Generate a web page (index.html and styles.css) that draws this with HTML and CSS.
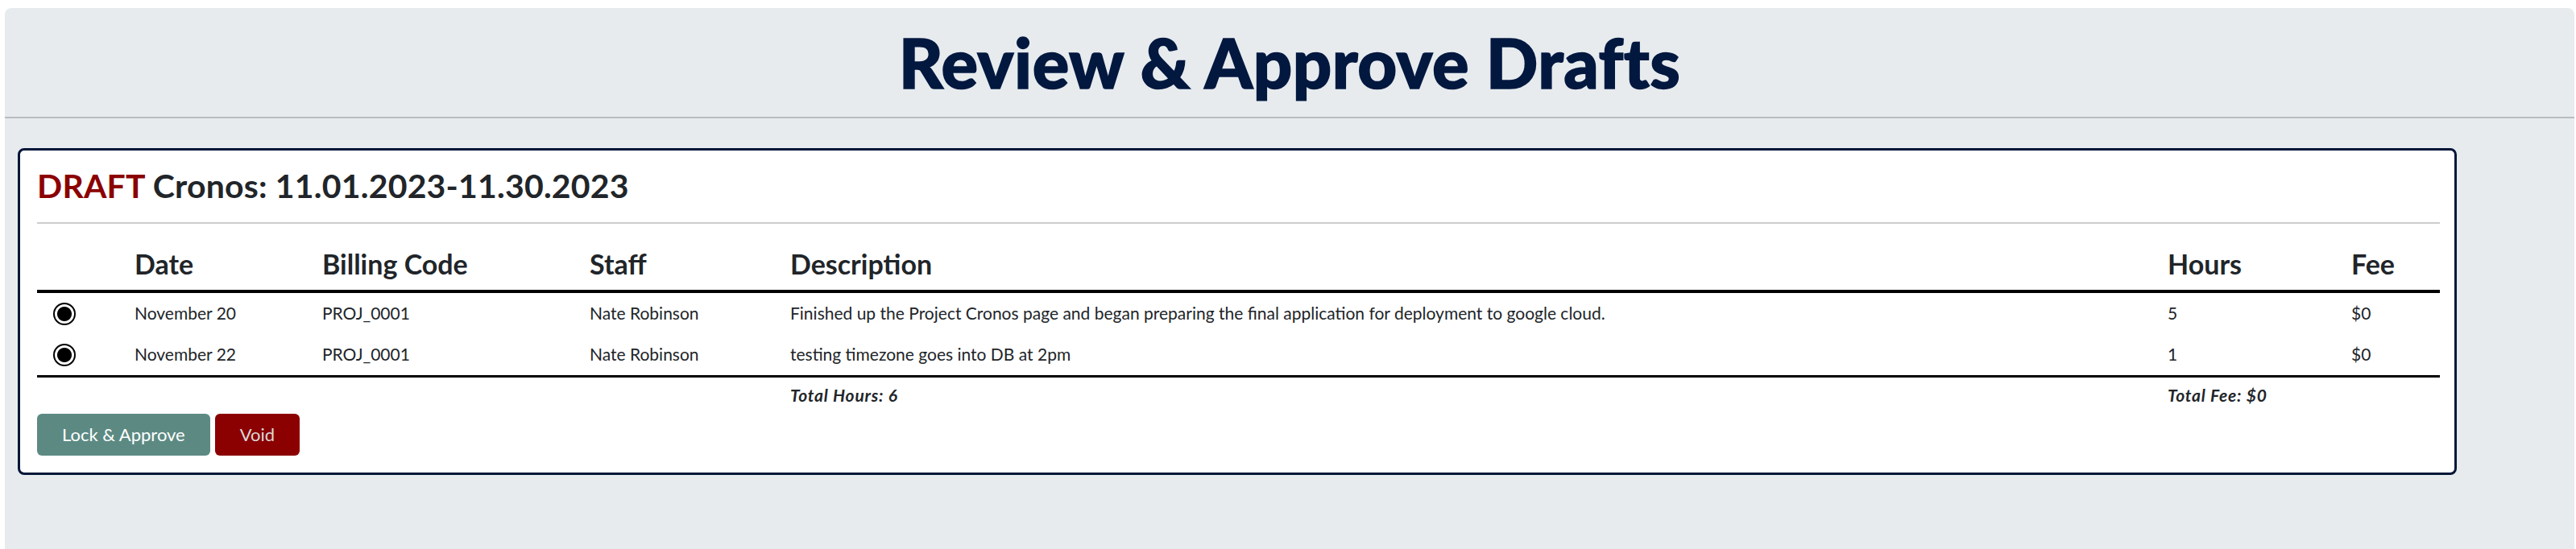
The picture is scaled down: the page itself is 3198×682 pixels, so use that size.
FILE: index.html
```html
<!DOCTYPE html>
<html lang="en">
<head>
<meta charset="utf-8">
<title>Review &amp; Approve Drafts</title>
<link rel="stylesheet" href="styles.css">
</head>
<body>
<div class="page">
  <header class="header">
    <h1 class="page-title">Review &amp; Approve Drafts</h1>
  </header>
  <main class="content">
    <section class="card">
      <h2 class="card-title"><span class="draft">DRAFT</span> Cronos: 11.01.2023-11.30.2023</h2>
      <hr class="rule">
      <table class="entries">
        <colgroup>
          <col class="c-sel"><col class="c-date"><col class="c-code"><col class="c-staff"><col class="c-desc"><col class="c-hours"><col class="c-fee">
        </colgroup>
        <thead>
          <tr>
            <th></th>
            <th>Date</th>
            <th>Billing Code</th>
            <th>Staff</th>
            <th>Description</th>
            <th>Hours</th>
            <th>Fee</th>
          </tr>
        </thead>
        <tbody>
          <tr>
            <td class="sel"><input class="radio" type="radio" checked></td>
            <td>November 20</td>
            <td>PROJ_0001</td>
            <td>Nate Robinson</td>
            <td>Finished up the Project Cronos page and began preparing the final application for deployment to google cloud.</td>
            <td>5</td>
            <td>$0</td>
          </tr>
          <tr class="last">
            <td class="sel"><input class="radio" type="radio" checked></td>
            <td>November 22</td>
            <td>PROJ_0001</td>
            <td>Nate Robinson</td>
            <td>testing timezone goes into DB at 2pm</td>
            <td>1</td>
            <td>$0</td>
          </tr>
        </tbody>
        <tfoot>
          <tr>
            <td></td><td></td><td></td><td></td>
            <td class="total">Total Hours: 6</td>
            <td class="total" colspan="2">Total Fee: $0</td>
          </tr>
        </tfoot>
      </table>
      <div class="actions">
        <button class="btn btn-approve" type="button">Lock &amp; Approve</button>
        <button class="btn btn-void" type="button">Void</button>
      </div>
    </section>
  </main>
</div>
</body>
</html>
```
FILE: styles.css
```css
* { box-sizing: border-box; }

html, body {
  margin: 0;
  padding: 0;
  background: #ffffff;
  height: 100%;
}

body {
  font-family: "Lato", "Liberation Sans", sans-serif;
  color: #212529;
}

.page {
  margin: 10px 2px 0 6px;
  min-height: calc(100vh - 10px);
  background: #e7ebee;
  border-radius: 8px 8px 0 0;
}

.header {
  height: 137px;
  border-bottom: 2px solid #b9bdc0;
  display: flex;
  align-items: center;
  justify-content: center;
}

.page-title {
  margin: 0;
  font-family: "Lato", sans-serif;
  font-weight: 900;
  font-size: 85px;
  line-height: 1;
  color: #02183f;
  letter-spacing: 0.5px;
  -webkit-text-stroke: 1.5px #02183f;
}

.content {
  padding: 37px 146px 0 16px;
}

.card {
  background: #ffffff;
  border: 3px solid #011638;
  border-radius: 8px;
  padding: 19px 18px 21px 21px;
}

.card-title {
  margin: 0;
  font-size: 41px;
  line-height: 1.2;
  font-weight: 700;
  color: #212529;
  letter-spacing: 0.2px;
}

.draft {
  color: #8b0000;
}

.rule {
  margin: 21px 0 0;
  border: 0;
  border-top: 2px solid #cccccc;
  height: 0;
}

.entries {
  width: 100%;
  table-layout: fixed;
  border-collapse: collapse;
}

.c-sel { width: 113px; }
.c-date { width: 233px; }
.c-code { width: 332px; }
.c-staff { width: 249px; }
.c-desc { width: 1710px; }
.c-hours { width: 228px; }
.c-fee { width: 118px; }

.entries th {
  text-align: left;
  font-size: 34px;
  line-height: 40px;
  font-weight: 700;
  padding: 30px 8px 12px;
  border-bottom: 4px solid #000000;
}

.entries tbody td {
  font-size: 21px;
  line-height: 27px;
  font-weight: 400;
  padding: 11px 8px 13px;
  vertical-align: middle;
  white-space: nowrap;
  color: #212529;
}

.entries tbody tr.last td {
  border-bottom: 3px solid #000000;
}

.entries td.sel {
  padding: 0 0 0 20px;
  line-height: 0;
}

.radio {
  appearance: none;
  -webkit-appearance: none;
  margin: 0;
  width: 28px;
  height: 28px;
  border: 2.5px solid #000000;
  border-radius: 50%;
  background: radial-gradient(circle, #000000 0 8.5px, #ffffff 9.5px);
  vertical-align: middle;
}

.entries tfoot td {
  font-size: 21px;
  line-height: 27px;
  padding: 8px 8px 8px;
}

.entries td.total {
  font-weight: 700;
  font-style: italic;
  letter-spacing: 0.8px;
}

.actions {
  display: flex;
  gap: 6px;
  margin-top: 2px;
}

.btn {
  font-family: "Lato", sans-serif;
  font-size: 22px;
  line-height: 30px;
  font-weight: 400;
  height: 52px;
  padding: 11px 31px;
  border: 0;
  border-radius: 6px;
  cursor: pointer;
}

.btn-approve {
  background: #5c8a83;
  color: #ffffff;
}

.btn-void {
  background: #8b0000;
  color: #d9d9d9;
}
```
